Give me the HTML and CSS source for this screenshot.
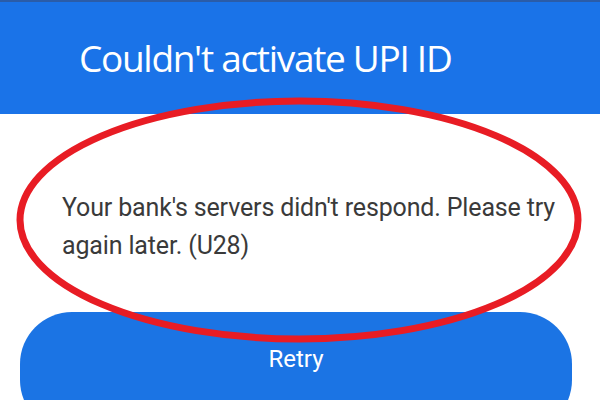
FILE: index.html
```html
<!DOCTYPE html>
<html lang="en">
<head>
  <meta charset="UTF-8" />
  <title>Couldn't activate UPI ID</title>
  <link rel="stylesheet" href="styles.css">
</head>
<body>

<div class="dialog">
  <div class="header">
    <h2>Couldn't activate UPI ID</h2>
  </div>

  <p class="message">Your bank's servers didn't respond. Please try again later. (U28)</p>

  <button class="retry">Retry</button>

  <!-- red marker circle drawn over the screenshot -->
  <svg class="marker" width="600" height="400" viewBox="0 0 600 400">
    <ellipse cx="299" cy="220" rx="279" ry="119" fill="none" stroke="#e81c24" stroke-width="7" />
  </svg>
</div>

</body>
</html>
```

FILE: styles.css
```css
body {
  margin: 0;
  background: #ffffff;
  font-family: Roboto, 'Liberation Sans', sans-serif;
}

.dialog {
  position: relative;
  width: 600px;
  height: 400px;
  overflow: hidden;
}

.header {
  background: #1a73e8;
  border-top: 2px solid #2a5ca8;
  height: 114px;
  padding-left: 79px;
  box-sizing: border-box;
}

.header h2 {
  margin: 0;
  padding-top: 32px;
  font-family: 'Open Sans', sans-serif;
  font-weight: 400;
  font-size: 37px;
  line-height: 48px;
  color: #ffffff;
  letter-spacing: -1.3px;
}

.message {
  margin: 0;
  padding: 75px 20px 0 62px;
  font-size: 25px;
  line-height: 38px;
  letter-spacing: -0.15px;
  color: #3a3a3a;
  height: 123px;
}

.retry {
  display: block;
  margin-left: 20px;
  width: 552px;
  height: 120px;
  padding-bottom: 28px;
  background: #1b74e4;
  color: #ffffff;
  border: none;
  border-radius: 52px;
  font-family: Roboto, sans-serif;
  font-size: 24px;
}

.marker {
  position: absolute;
  left: 0;
  top: 0;
}
```
